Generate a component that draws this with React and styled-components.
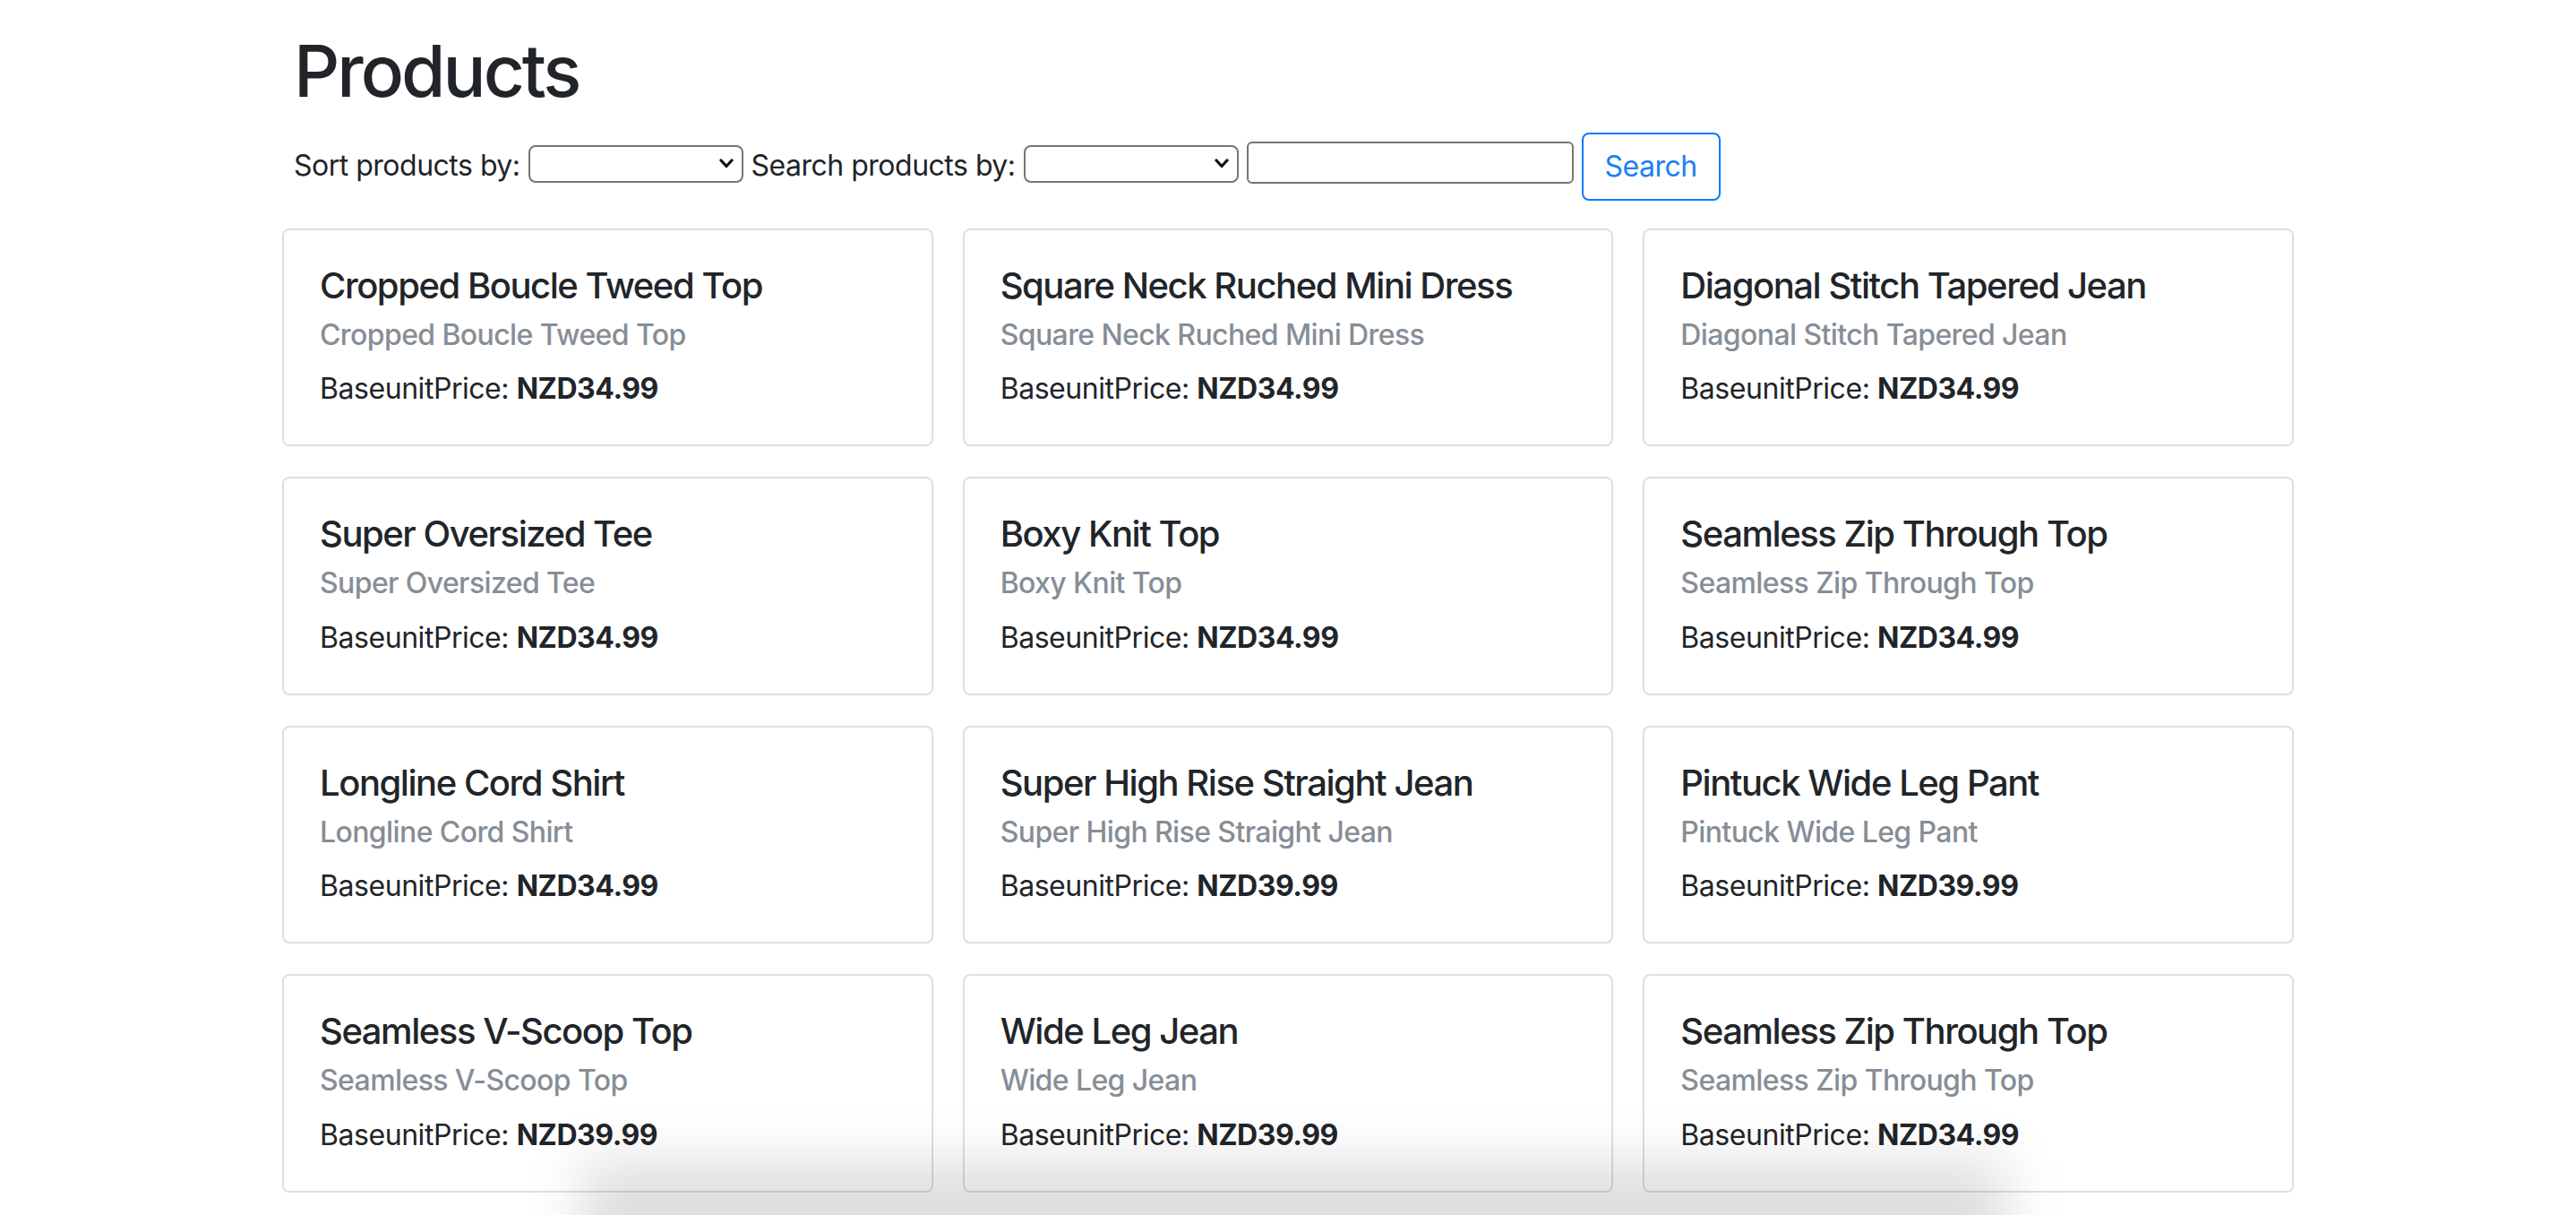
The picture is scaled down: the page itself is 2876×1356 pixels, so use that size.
import React from 'react'
import styled, { createGlobalStyle } from 'styled-components'

const products = [
  { name: 'Cropped Boucle Tweed Top', price: '34.99' },
  { name: 'Square Neck Ruched Mini Dress', price: '34.99' },
  { name: 'Diagonal Stitch Tapered Jean', price: '34.99' },
  { name: 'Super Oversized Tee', price: '34.99' },
  { name: 'Boxy Knit Top', price: '34.99' },
  { name: 'Seamless Zip Through Top', price: '34.99' },
  { name: 'Longline Cord Shirt', price: '34.99' },
  { name: 'Super High Rise Straight Jean', price: '39.99' },
  { name: 'Pintuck Wide Leg Pant', price: '39.99' },
  { name: 'Seamless V-Scoop Top', price: '39.99' },
  { name: 'Wide Leg Jean', price: '39.99' },
  { name: 'Seamless Zip Through Top', price: '34.99' },
]

export default function App(){
  return(
    <>
      <GlobalStyle />
      <Page>
        <Header>
          <Title>Products</Title>
          <Controls>
            <Label>Sort products by:</Label>
            <Select />
            <Label>Search products by:</Label>
            <Select />
            <SearchInput type="text" />
            <SearchButton type="button">Search</SearchButton>
          </Controls>
        </Header>
        <Grid>
          {products.map( (product, i) => <ProductCard key={i} product={product} /> )}
        </Grid>
      </Page>
      <BottomShade />
    </>
  )
}

function Select(){
  return(
    <SelectWrap>
      <NativeSelect defaultValue="">
        <option value=""></option>
        <option value="name">Name</option>
        <option value="price">Price</option>
      </NativeSelect>
      <Chevron width="16" height="11" viewBox="0 0 16 11">
        <polyline points="2,2 8,8.5 14,2" fill="none" stroke="#111" strokeWidth="3.2" strokeLinecap="round" strokeLinejoin="round" />
      </Chevron>
    </SelectWrap>
  )
}

function ProductCard({ product }){
  return(
    <Card>
      <CardTitle>{product.name}</CardTitle>
      <CardSubtitle>{product.name}</CardSubtitle>
      <CardText>BaseunitPrice: <strong>NZD{product.price}</strong></CardText>
    </Card>
  )
}

// Styles
const GlobalStyle = createGlobalStyle`
  html, body { margin:0; padding:0; background:#fff; overflow:hidden; }
  body { font-family: Inter, "Liberation Sans", Arial, sans-serif; color:#212529; }
  * { box-sizing:border-box; }
`

const Page = styled.div` width:2246px; margin:0 auto; padding-top:31px; `
  const Header = styled.div` padding-left:13px; `
  const Title = styled.h1` margin:0; font-size:80px; line-height:96px; font-weight:500; letter-spacing:-3px; `

  const Controls = styled.div` display:flex; align-items:center; gap:9px; margin-top:21px; height:76px; `
  const Label = styled.span` font-size:32px; line-height:48px; margin-bottom:2px; letter-spacing:-0.5px; `

  const SelectWrap = styled.div` position:relative; display:flex; margin-bottom:6px; `
  const NativeSelect = styled.select`
    appearance:none; width:240px; height:42px; border:2px solid #767676; border-radius:8px;
    background:#fff; font-size:26px; font-family:inherit; padding:0 36px 0 8px; color:#111;
  `
  const Chevron = styled.svg` position:absolute; right:11px; top:15px; pointer-events:none; `

  const SearchInput = styled.input`
    width:365px; height:47px; border:2px solid #767676; border-radius:6px;
    font-size:26px; padding:0 6px; margin-bottom:9px; background:#fff;
  `
  const SearchButton = styled.button`
    height:76px; padding:0 24px; border:2px solid #007bff; border-radius:8px; background:#fff;
    color:#1a7ff5; font-size:32px; font-family:inherit; line-height:48px; letter-spacing:-0.5px;
  `

const Grid = styled.div` display:grid; grid-template-columns:repeat(3, 1fr); column-gap:33px; row-gap:34px; margin-top:31px; `
  const Card = styled.div` border:2px solid #dfdfdf; border-radius:8px; padding:38px 40px 38px; background:#fff; `
  const CardTitle = styled.h5` margin:0 0 24px; font-size:40px; line-height:48px; font-weight:500; letter-spacing:-1.45px; `
  const CardSubtitle = styled.h6` margin:-12px 0 17px; font-size:32px; line-height:38.4px; font-weight:500; color:#868e96; letter-spacing:-0.6px; `
  const CardText = styled.p` margin:0; font-size:32px; line-height:48px; letter-spacing:-0.45px; strong { font-weight:700; } `

const BottomShade = styled.div`
  position:fixed; left:650px; width:1590px; bottom:-80px; height:140px;
  background:rgba(0,0,0,0.13); filter:blur(30px); pointer-events:none;
`
